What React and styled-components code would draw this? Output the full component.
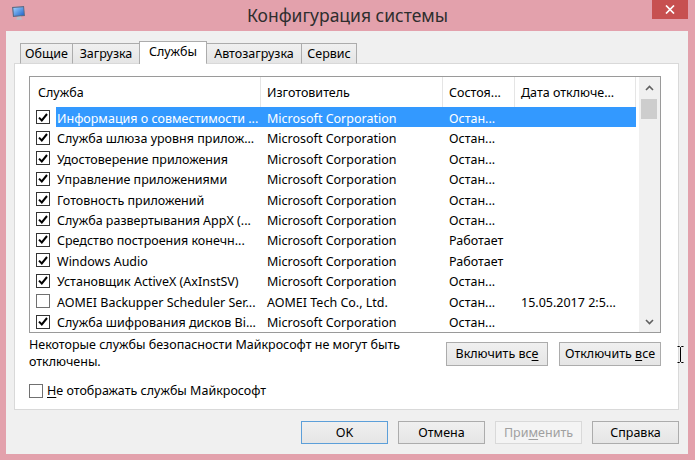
import React from "react";
import styled, { createGlobalStyle, css } from "styled-components";

const GlobalStyle = createGlobalStyle`
  html, body {
    margin: 0;
    padding: 0;
    background: #e3a1ac;
  }
  body {
    font-family: "Noto Sans", "Open Sans", sans-serif;
    font-size: 12.5px;
    color: #000;
  }
  * {
    box-sizing: border-box;
  }
`;

const Window = styled.div`
  position: relative;
  width: 695px;
  height: 460px;
  background: #e3a1ac;
  display: flex;
  flex-direction: column;
  overflow: hidden;
`;

const TitleBar = styled.div`
  height: 31px;
  flex: none;
  display: grid;
  grid-template-columns: 1fr auto 1fr;
  align-items: start;
`;

const AppIcon = styled.div`
  padding: 5px 0 0 11px;
  display: flex;
`;

const Title = styled.div`
  font-size: 17.5px;
  line-height: 30px;
  color: #2e2e2e;
  white-space: nowrap;
`;

const CloseButton = styled.div`
  justify-self: end;
  margin-right: 7px;
  width: 36px;
  height: 19px;
  background: #c75050;
  display: flex;
  align-items: center;
  justify-content: center;
`;

const Client = styled.div`
  flex: 1;
  margin: 0 7px 6px 6px;
  background: #f0f0f0;
  display: flex;
  flex-direction: column;
  padding: 10px 9px 10px 8px;
`;

const TabStrip = styled.div`
  height: 23px;
  margin-bottom: -1px;
  padding-left: 6px;
  display: flex;
  align-items: flex-end;
  position: relative;
  z-index: 1;
`;

const Tab = styled.div`
  width: ${(p) => p.$w}px;
  height: ${(p) => (p.$active ? 23 : 21)}px;
  border: 1px solid #acacac;
  border-bottom: ${(p) => (p.$active ? "none" : "1px solid #d9d9d9")};
  margin-left: -1px;
  background: ${(p) =>
    p.$active ? "#fff" : "linear-gradient(#f0f0f0, #e5e5e5)"};
  text-align: center;
  padding-top: 1px;
  white-space: nowrap;
  line-height: 17px;
  &:first-child {
    margin-left: 0;
  }
`;

const Pane = styled.div`
  flex: 1;
  background: #fff;
  border: 1px solid #d9d9d9;
  padding: 12px 17px 0 14px;
  display: flex;
  flex-direction: column;
`;

const ListBox = styled.div`
  height: 257px;
  border: 1px solid #9a9a9a;
  display: flex;
  flex: none;
`;

const ListContent = styled.div`
  flex: 1;
  display: flex;
  flex-direction: column;
  overflow: hidden;
`;

const COLUMNS = "231px 182px 72px 121px";

const HeaderRow = styled.div`
  height: 30px;
  flex: none;
  display: grid;
  grid-template-columns: ${COLUMNS};
`;

const HeaderCell = styled.div`
  border-right: 1px solid #e5e5e5;
  padding-left: ${(p) => (p.$first ? 8 : 6)}px;
  display: flex;
  align-items: center;
  white-space: nowrap;
  overflow: hidden;
`;

const Cell = styled.div`
  padding: 2px 0 0 6px;
  display: flex;
  align-items: center;
  white-space: nowrap;
  overflow: hidden;
`;

const NameCell = styled.div`
  display: flex;
  align-items: center;
  padding-left: 6px;
`;

const Label = styled.div`
  flex: 1;
  align-self: stretch;
  display: flex;
  align-items: center;
  margin-left: 6px;
  padding: 2px 0 0 1px;
  white-space: nowrap;
  overflow: hidden;
`;

const Row = styled.div`
  flex: 1 1 0;
  display: grid;
  grid-template-columns: ${COLUMNS};
  ${(p) =>
    p.$selected &&
    css`
      color: #fff;
      ${Cell}, ${Label} {
        background: #3399ff;
      }
    `}
`;

const Box = styled.span`
  width: 14px;
  height: 14px;
  flex: none;
  border: 1px solid ${(p) => (p.$checked ? "#333" : "#707070")};
  background: #fff;
  display: flex;
  align-items: center;
  justify-content: center;
`;

const ScrollBar = styled.div`
  width: 21px;
  flex: none;
  background: #f0f0f0;
  display: flex;
  flex-direction: column;
`;

const Arrow = styled.div`
  height: 21px;
  flex: none;
  display: flex;
  align-items: center;
  justify-content: center;
`;

const Track = styled.div`
  flex: 1;
`;

const Thumb = styled.div`
  height: 20px;
  margin: 1px 3px 0 2px;
  background: #cdcdcd;
`;

const NoteRow = styled.div`
  margin-top: 3px;
  display: flex;
  align-items: flex-start;
`;

const Note = styled.div`
  flex: 1;
  line-height: 17px;
`;

const ButtonGroup = styled.div`
  margin-top: 6px;
  display: flex;
  gap: 11px;
`;

const Button = styled.div`
  width: ${(p) => p.$w || 87}px;
  height: ${(p) => p.$h || 23}px;
  line-height: ${(p) => (p.$h || 23) - 2}px;
  border: 1px solid
    ${(p) => (p.$default ? "#5c9fd9" : p.$disabled ? "#d9d9d9" : "#acacac")};
  background: ${(p) =>
    p.$disabled ? "#f4f4f4" : "linear-gradient(#f0f0f0, #e5e5e5)"};
  color: ${(p) => (p.$disabled ? "#a0a0a0" : "#000")};
  text-align: center;
  white-space: nowrap;
`;

const CheckRow = styled.div`
  margin-top: 12px;
  display: flex;
  align-items: center;
  gap: 4px;
  line-height: 17px;
`;

const U = styled.span`
  text-decoration: underline;
  text-underline-offset: 2px;
`;

const Footer = styled.div`
  margin-top: 11px;
  display: flex;
  justify-content: flex-end;
  gap: 10px;
`;

const Cursor = styled.svg`
  position: absolute;
  left: 677px;
  top: 346px;
`;

const Check = ({ checked }) => (
  <Box $checked={checked}>
    {checked && (
      <svg width="10" height="9" viewBox="0 0 10 9">
        <path d="M1 4.6 L3.8 7.4 L9 1" fill="none" stroke="#000" strokeWidth="2" />
      </svg>
    )}
  </Box>
);

const MS = "Microsoft Corporation";
const STOP = "Остан...";

const services = [
  { name: "Информация о совместимости ...", maker: MS, state: STOP, on: true, selected: true },
  { name: "Служба шлюза уровня прилож...", maker: MS, state: STOP, on: true },
  { name: "Удостоверение приложения", maker: MS, state: STOP, on: true },
  { name: "Управление приложениями", maker: MS, state: STOP, on: true },
  { name: "Готовность приложений", maker: MS, state: STOP, on: true },
  { name: "Служба развертывания AppX (...", maker: MS, state: STOP, on: true },
  { name: "Средство построения конечн...", maker: MS, state: "Работает", on: true },
  { name: "Windows Audio", maker: MS, state: "Работает", on: true },
  { name: "Установщик ActiveX (AxInstSV)", maker: MS, state: STOP, on: true },
  { name: "AOMEI Backupper Scheduler Ser...", maker: "AOMEI Tech Co., Ltd.", state: STOP, date: "15.05.2017 2:5...", on: false },
  { name: "Служба шифрования дисков Bi...", maker: MS, state: STOP, on: true },
];

const tabs = [
  { label: "Общие", w: 53 },
  { label: "Загрузка", w: 68 },
  { label: "Службы", w: 68, active: true },
  { label: "Автозагрузка", w: 96 },
  { label: "Сервис", w: 56 },
];

const App = () => (
  <Window>
    <GlobalStyle />
    <TitleBar>
      <AppIcon>
        <svg width="16" height="16" viewBox="0 0 16 16">
          <defs>
            <linearGradient id="scr" x1="0" y1="0" x2="1" y2="1">
              <stop offset="0" stopColor="#9fd2ff" />
              <stop offset="1" stopColor="#1f63c8" />
            </linearGradient>
          </defs>
          <path d="M1 2 L13 1 L14 11 L2 12 Z" fill="#5a6b86" />
          <path d="M2.3 3 L12.2 2.2 L12.9 10 L3 10.8 Z" fill="url(#scr)" />
          <path d="M6 12 L10 11.6 L11 14.5 L5.5 15 Z" fill="#b9bec7" />
        </svg>
      </AppIcon>
      <Title>Конфигурация системы</Title>
      <CloseButton>
        <svg width="10" height="9" viewBox="0 0 10 9">
          <path d="M1 0.5 L9 8.5 M9 0.5 L1 8.5" stroke="#fff" strokeWidth="1.7" />
        </svg>
      </CloseButton>
    </TitleBar>
    <Client>
      <TabStrip>
        {tabs.map((t) => (
          <Tab key={t.label} $w={t.w} $active={t.active}>
            {t.label}
          </Tab>
        ))}
      </TabStrip>
      <Pane>
        <ListBox>
          <ListContent>
            <HeaderRow>
              <HeaderCell $first>Служба</HeaderCell>
              <HeaderCell>Изготовитель</HeaderCell>
              <HeaderCell>Состоя...</HeaderCell>
              <HeaderCell>Дата отключе...</HeaderCell>
            </HeaderRow>
            {services.map((s) => (
              <Row key={s.name} $selected={s.selected}>
                <NameCell>
                  <Check checked={s.on} />
                  <Label>{s.name}</Label>
                </NameCell>
                <Cell>{s.maker}</Cell>
                <Cell>{s.state}</Cell>
                <Cell>{s.date}</Cell>
              </Row>
            ))}
          </ListContent>
          <ScrollBar>
            <Arrow>
              <svg width="9" height="6" viewBox="0 0 9 6">
                <path d="M1 5 L4.5 1.5 L8 5" fill="none" stroke="#606060" strokeWidth="1.6" />
              </svg>
            </Arrow>
            <Track>
              <Thumb />
            </Track>
            <Arrow>
              <svg width="9" height="6" viewBox="0 0 9 6">
                <path d="M1 1 L4.5 4.5 L8 1" fill="none" stroke="#606060" strokeWidth="1.6" />
              </svg>
            </Arrow>
          </ScrollBar>
        </ListBox>
        <NoteRow>
          <Note>
            Некоторые службы безопасности Майкрософт не могут быть
            <br />
            отключены.
          </Note>
          <ButtonGroup>
            <Button $w={102} $h={24}>
              Включить вс<U>е</U>
            </Button>
            <Button $w={102} $h={24}>
              Отключить <U>в</U>се
            </Button>
          </ButtonGroup>
        </NoteRow>
        <CheckRow>
          <Check checked={false} />
          <span>
            <U>Н</U>е отображать службы Майкрософт
          </span>
        </CheckRow>
      </Pane>
      <Footer>
        <Button $default>OK</Button>
        <Button>Отмена</Button>
        <Button $disabled>
          При<U>м</U>енить
        </Button>
        <Button>Справка</Button>
      </Footer>
    </Client>
    <Cursor width="7" height="17" viewBox="0 0 7 17">
      <path d="M0.5 0.5 H2.5 L3.5 1.5 L4.5 0.5 H6.5 M3.5 1.5 V15.5 M0.5 16.5 H2.5 L3.5 15.5 L4.5 16.5 H6.5" fill="none" stroke="#000" strokeWidth="1" />
    </Cursor>
  </Window>
);

export default App;
